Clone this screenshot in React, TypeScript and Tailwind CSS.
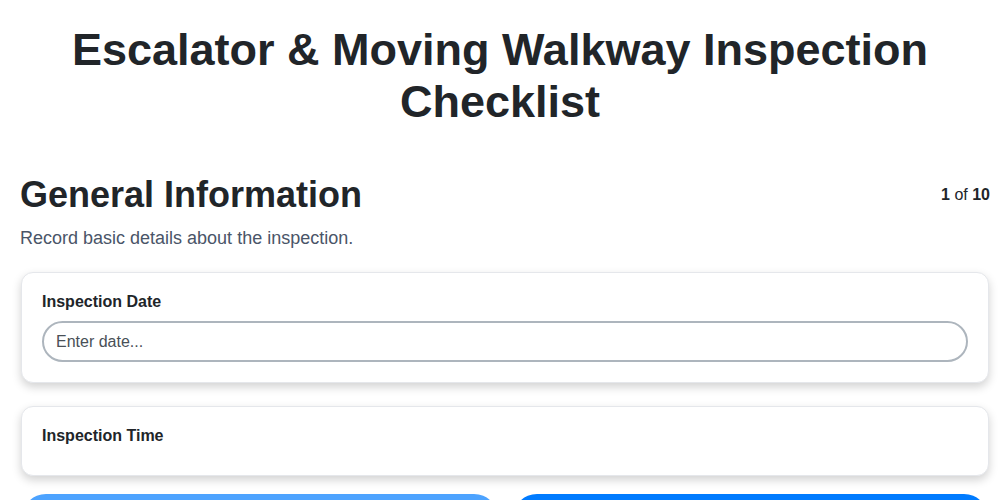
export default function App() {
  return (
    <div className="h-screen overflow-hidden bg-white pt-6 text-[#212529]" style={{ fontFamily: '"Liberation Sans", Arial, sans-serif' }}>
      <h1 className="px-5 text-center text-[45px] font-bold leading-[52px]">
        Escalator &amp; Moving Walkway Inspection Checklist
      </h1>

      <main className="pl-5 pr-2.5">
        <div className="mt-[45px] flex items-center justify-between">
          <h2 className="text-[36px] font-bold leading-[1.2]">General Information</h2>
          <p className="text-base">
            <span className="font-bold">1</span> of <span className="font-bold">10</span>
          </p>
        </div>
        <p className="mt-2 text-[18px] leading-7 text-[#4a5568]">Record basic details about the inspection.</p>

        <div className="mt-[20px] mb-[23px] ml-px mr-px rounded-xl border border-[#e5e7eb] bg-white p-5 shadow-[0_4px_10px_rgba(0,0,0,0.18)]">
          <label className="mb-2.5 block text-base font-bold leading-[18px]">Inspection Date</label>
          <input
            type="text"
            placeholder="Enter date..."
            className="block h-[41px] w-full rounded-full border-2 border-[#adb5bd] px-3 text-base text-[#212529] outline-none placeholder:text-[#495057]"
          />
        </div>

        <div className="mb-[18px] ml-px mr-px rounded-xl border border-[#e5e7eb] bg-white p-5 shadow-[0_4px_10px_rgba(0,0,0,0.18)]">
          <label className="mb-2.5 block text-base font-bold leading-[18px]">Inspection Time</label>
        </div>

        <div className="flex gap-[15px] px-0.5">
          <button className="h-12 flex-1 rounded-full bg-[#4da3ff] text-base font-semibold text-white">Previous</button>
          <button className="h-12 flex-1 rounded-full bg-[#007bff] text-base font-semibold text-white">Next</button>
        </div>
      </main>
    </div>
  )
}
